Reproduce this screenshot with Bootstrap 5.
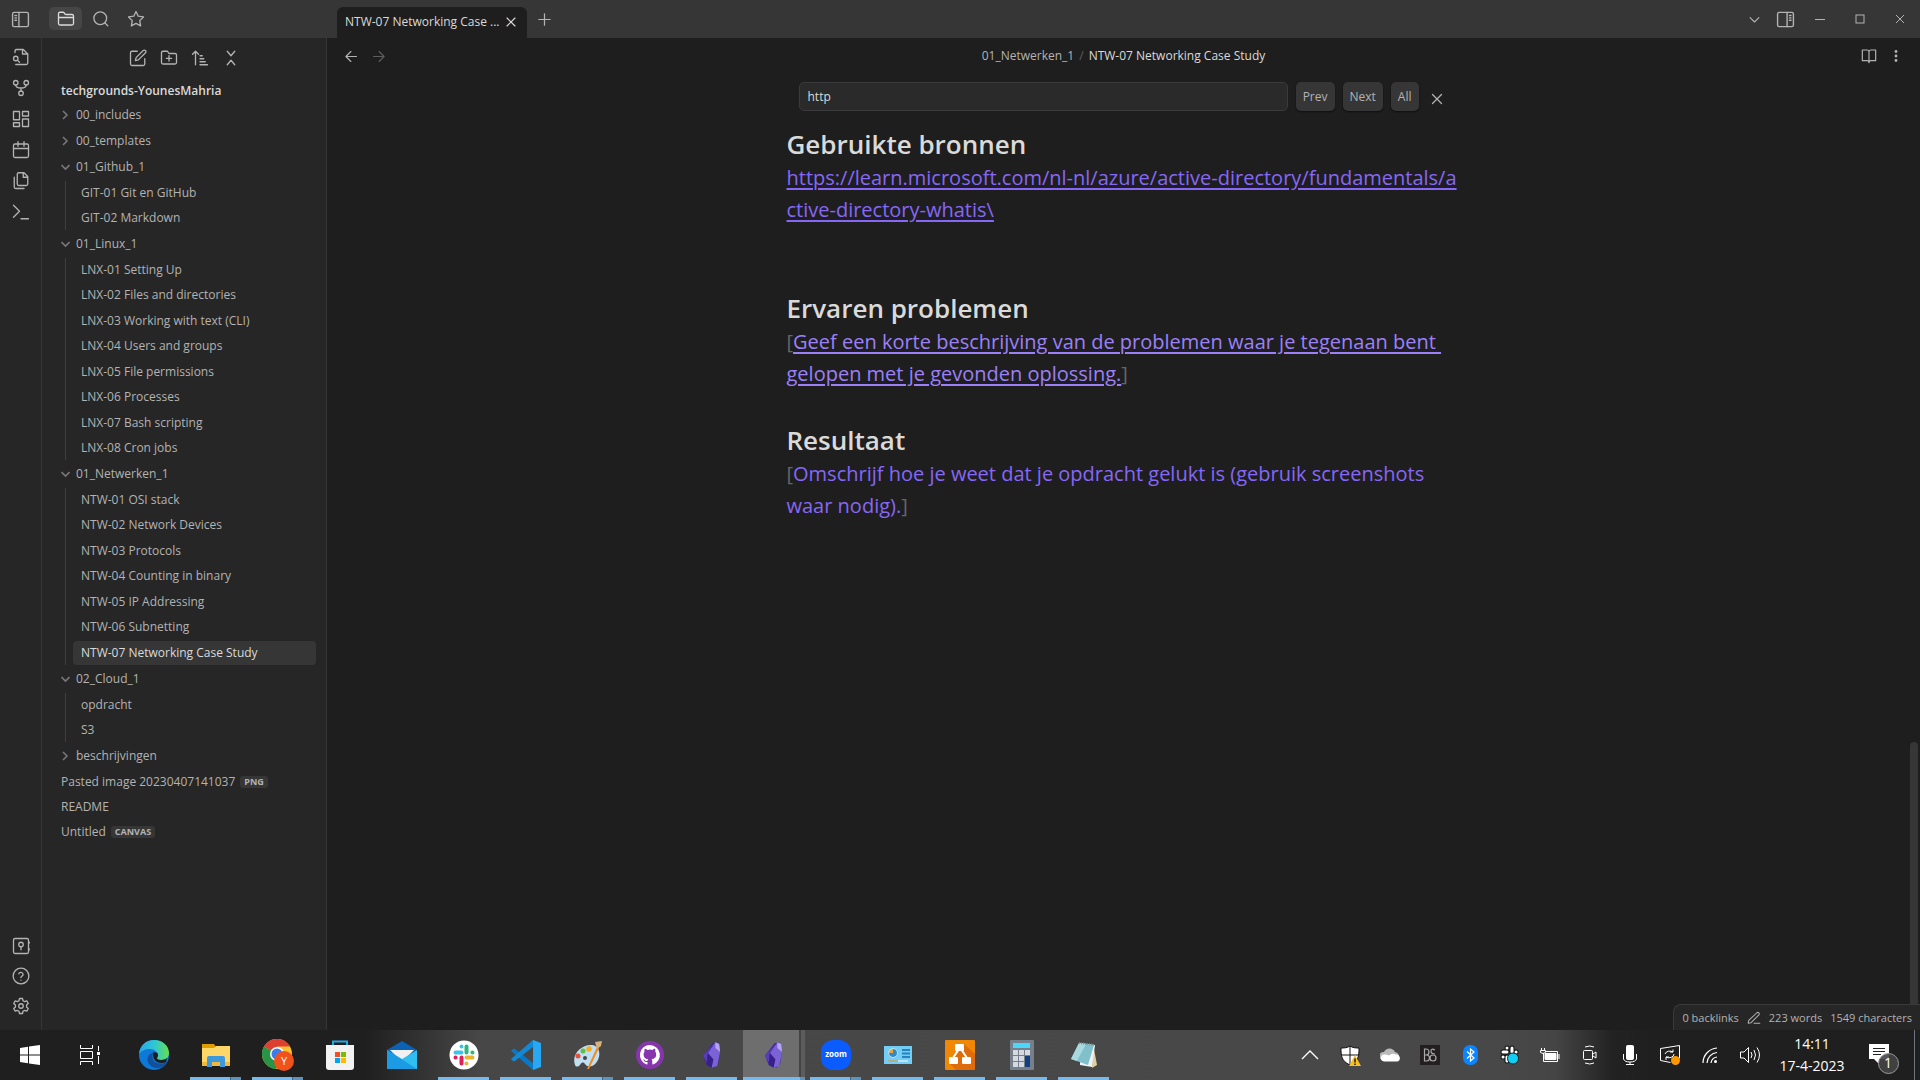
<!DOCTYPE html>
<html lang="nl" data-bs-theme="dark">
<head>
<meta charset="utf-8">
<meta name="viewport" content="width=device-width, initial-scale=1">
<title>NTW-07 Networking Case Study</title>
<link href="https://cdn.jsdelivr.net/npm/bootstrap@5.3.0/dist/css/bootstrap.min.css" rel="stylesheet">
<style>
:root{--bg:#1e1e1e;--side:#262626;--bar:#363636;--txt:#dadada;--mut:#b3b3b3;--faint:#666}
body{font-family:"Open Sans","Noto Sans",sans-serif;font-size:12px;line-height:24px;background:var(--bg);color:var(--mut)}
button{background:none;border:0;padding:0;color:inherit;display:inline-flex;align-items:center;justify-content:center;flex:none}
a{color:inherit;text-decoration:none}
svg{flex:none;display:block}
.ln{fill:none;stroke:currentColor;stroke-width:1.75;stroke-linecap:round;stroke-linejoin:round}
.titlebar{height:38px;background:var(--bar)}
.left-head{width:327px;padding:7px 0 0 10px}
.sq{width:20px;height:24px}
.panes{gap:2px;margin-left:19px}
.pane-tab{width:33px;height:23px;border-radius:5px}
.pane-tab.on{background:#464646;color:var(--txt)}
.doc-tab{width:190px;height:31px;margin:7px 0 0 10px;padding:0 8px 2px 8px;border-radius:6px 6px 0 0;background:var(--bg);color:var(--txt)}
.new-tab{margin-left:9px}
.win button{width:32px}
.win .tabs-menu{width:24px}
.win .right-side{width:38px}
.win .maxi{width:48px}
.mid{min-height:0}
.ribbon{width:42px;border-right:1px solid var(--bar);background:var(--side);padding:9px 0 14px}
.ribbon button{width:41px;height:20px}
.ribbon-set{gap:10px}
.ribbon-top{gap:11px}
.explorer{width:285px;border-right:1px solid var(--bar);background:var(--side)}
.acts{padding:10px 0 10px;gap:11px}
.acts button{width:20px;height:20px}
.tree{padding:1px 10px 0 19px}
.vault{color:var(--txt);font-weight:600}
.node{display:flex;align-items:center;height:24px;border-radius:4px;white-space:nowrap}
.dir{margin-bottom:2px;gap:6px}
.dir svg{color:#777}
.kids{margin-left:4px;border-left:1px solid #3f3f3f;padding-left:7px;margin-bottom:2px}
.kids .node{padding-left:8px;margin-bottom:1px}
.kids .node:nth-child(even){margin-bottom:2px}
.kids .node:last-child{margin-bottom:0}
.node.on{background:var(--bar);color:var(--txt)}
.file{margin-bottom:1px;gap:5px}
.ext{background:var(--bar);border-radius:3px;font-size:9px;font-weight:700;line-height:12px;padding:0 4px}
.view-head{height:36px;padding:0 14px 0 14px}
.crumbs{gap:5px}
.crumbs .here{color:var(--txt)}
.dim{color:#5e5e5e}
.pair{gap:7px}
.note{width:100%;max-width:674px}
.find{padding:8px 14px 15px 12px;gap:8px}
.find input{height:29px;min-width:0;background:#2a2a2a;border:1px solid #3a3a3a;border-radius:5px;color:var(--txt);padding:0 8px;font-size:12px;outline:0}
.find .act{height:29px;padding:0 7px;background:var(--bar);border-radius:5px;box-shadow:0 1px 2px #0008}
.note h2{font-size:26px;line-height:36px;font-weight:600;color:var(--txt);margin:0}
.note p{font-size:20px;line-height:32px;color:#8767f8;white-space:nowrap;margin:0 0 32px}
.note .sources{margin-bottom:64px}
.note .brk{color:var(--faint)}
.note p a{text-decoration:underline;text-decoration-thickness:2px;text-underline-offset:3px}
.note .lit{color:#9c80f8}
.thumb{right:2px;top:704px;bottom:26px;width:8px;border-radius:4px 4px 0 0;background:var(--bar)}
.status{right:0;bottom:0;height:26px;padding:0 8px;border:1px solid #3a3a3a;border-width:1px 0 0 1px;border-radius:8px 0 0 0;background:var(--side);font-size:11px}
.taskbar{height:50px;background:linear-gradient(90deg,#1f1f1f 0,#1f1f1f 19%,#474747 25%,#484848 78%,#454545 81%,#222 84%,#1f1f1f 86%);color:#fff}
.start{width:60px}
.apps{margin-left:3px}
.app{width:62px;position:relative}
.run::after{content:"";position:absolute;bottom:0;left:5px;width:51px;height:3px;background:#76b9ed}
.many::after{background:linear-gradient(90deg,#76b9ed 40px,#3f6583 40px,#3f6583 41px,#5e92ba 41px)}
.focus-app{background:linear-gradient(90deg,#6e6e6e 56px,#444 56px,#444 58px,#5c5c5c 58px)}
.focus-app::after{left:0;width:62px;background:linear-gradient(90deg,#76b9ed 57px,#5e92ba 57px)}
.tray button{width:40px}
.tray .notes{width:60px}
.peek{width:6px}
.clock{width:84px;font-size:14px;line-height:22px;padding-top:3px}
</style>
<script src="https://cdn.jsdelivr.net/npm/bootstrap@5.3.0/dist/js/bootstrap.bundle.min.js"></script>
</head>
<body>
<svg width="0" height="0" class="position-absolute" aria-hidden="true">
<defs>
<symbol id="right" viewBox="0 0 9 12"><path d="M2 2l4 4-4 4" fill="none" stroke="currentColor" stroke-width="1.6"/></symbol>
<symbol id="down" viewBox="0 0 9 12"><path d="M0.500 4l4 4 4-4" fill="none" stroke="currentColor" stroke-width="1.6"/></symbol>
<symbol id="cross" viewBox="0 0 24 24"><path d="M18 6L6 18M6 6l12 12"/></symbol>
<symbol id="gem" viewBox="0 0 20 30"><path d="M10 2l5-1 3 8-2 15-4 4-8-3-4-10z" fill="#43289a"/><path d="M13 1l4 2 1 8-3 15-6 2 1-8-5-7z" fill="#7b63d6"/><path d="M13 1l4 2 1 8-5-4z" fill="#b5a3f5"/><path d="M12 2L5 12l-1 10-4-7z" fill="#5a3dbd"/><path d="M5 12l6 7-2 9-5-3z" fill="#38208a"/></symbol>
</defs>
</svg>
<div class="d-flex flex-column vh-100 overflow-hidden">

<header class="titlebar d-flex flex-shrink-0">
  <div class="left-head d-flex align-items-start">
    <button class="sq" aria-label="Zijbalk"><svg class="ln" width="19" height="19" viewBox="0 0 24 24"><rect x="2" y="3" width="20" height="18" rx="2"/><path d="M10 3v18M5 7h2M5 10h2M5 13h2"/></svg></button>
    <div class="panes d-flex">
      <button class="pane-tab on" aria-label="Bestanden"><svg class="ln" width="18" height="18" viewBox="0 0 24 24"><path d="M4 20h16a2 2 0 0 0 2-2V8a2 2 0 0 0-2-2h-7.900a2 2 0 0 1-1.700-.9l-.8-1.200A2 2 0 0 0 7.900 3H4a2 2 0 0 0-2 2v13a2 2 0 0 0 2 2zM2 10h20"/></svg></button>
      <button class="pane-tab" aria-label="Zoeken"><svg class="ln" width="18" height="18" viewBox="0 0 24 24"><circle cx="11" cy="11" r="8.500"/><path d="M21 21l-4-4"/></svg></button>
      <button class="pane-tab" aria-label="Favorieten"><svg class="ln" width="18" height="18" viewBox="0 0 24 24"><path d="M12 2l3 6.300 7 1-5 4.900 1.200 6.900L12 17.800 5.800 21.100 7 14.200 2 9.300l7-1z"/></svg></button>
    </div>
  </div>
  <div class="doc-tab d-flex align-items-center justify-content-between"><span>NTW-07 Networking Case ...</span><button aria-label="Sluiten"><svg class="ln" width="16" height="16"><use href="#cross"/></svg></button></div>
  <button class="new-tab" aria-label="Nieuw tabblad"><svg class="ln" width="17" height="17" viewBox="0 0 24 24"><path d="M12 4v16M4 12h16"/></svg></button>
  <div class="win ms-auto me-1 d-flex align-items-center">
    <button class="tabs-menu" aria-label="Tabbladen"><svg class="ln" width="15" height="15" viewBox="0 0 24 24"><path d="M5 9l7 7 7-7"/></svg></button>
    <button class="right-side" aria-label="Rechter zijbalk"><svg class="ln" width="19" height="19" viewBox="0 0 24 24"><rect x="2" y="3" width="20" height="18" rx="2"/><path d="M14 3v18M17 7h2M17 10h2M17 13h2"/></svg></button>
    <button aria-label="Minimaliseren"><svg width="10" height="10"><path d="M0 5.500h10" stroke="currentColor"/></svg></button>
    <button class="maxi" aria-label="Maximaliseren"><svg width="10" height="10"><rect x="1" y="1" width="8" height="8" fill="none" stroke="currentColor"/></svg></button>
    <button aria-label="Afsluiten"><svg width="10" height="10"><path d="M1 1l8 8M9 1l-8 8" stroke="currentColor"/></svg></button>
  </div>
</header>

<div class="mid d-flex flex-grow-1">
  <nav class="ribbon d-flex flex-column justify-content-between flex-shrink-0">
    <div class="ribbon-set ribbon-top d-flex flex-column">
      <button aria-label="Snel zoeken"><svg class="ln" width="18" height="18" viewBox="0 0 24 24"><path d="M4 6V4a2 2 0 0 1 2-2h9l6 6v12a2 2 0 0 1-2 2H5M14 2v6h7"/><circle cx="5" cy="14" r="3"/><path d="M7.500 16.500L10 19"/></svg></button>
      <button aria-label="Grafiek"><svg class="ln" width="18" height="18" viewBox="0 0 24 24"><circle cx="12" cy="19" r="3"/><circle cx="5" cy="5" r="3"/><circle cx="19" cy="5" r="3"/><path d="M5 8c0 3 2 4 7 4s7-1 7-4M12 12v4"/></svg></button>
      <button aria-label="Canvas"><svg class="ln" width="18" height="18" viewBox="0 0 24 24"><path d="M2 2h8v11H2zM14 2h8v6h-8zM14 12h8v10h-8zM2 17h8v5H2z"/></svg></button>
      <button aria-label="Dagelijkse notitie"><svg class="ln" width="18" height="18" viewBox="0 0 24 24"><rect x="2" y="4" width="20" height="18" rx="2"/><path d="M16 1v6M8 1v6M2 10h20"/></svg></button>
      <button aria-label="Sjablonen"><svg class="ln" width="18" height="18" viewBox="0 0 24 24"><path d="M16 1H9a2 2 0 0 0-2 2v13a2 2 0 0 0 2 2h10a2 2 0 0 0 2-2V6zM15 1v6h6M3 7v13a2 2 0 0 0 2 2h11"/></svg></button>
      <button aria-label="Opdrachten"><svg class="ln" width="18" height="18" viewBox="0 0 24 24"><path d="M2 19l8-8-8-8M12 21h10"/></svg></button>
    </div>
    <div class="ribbon-set d-flex flex-column">
      <button aria-label="Kluis"><svg class="ln" width="18" height="18" viewBox="0 0 24 24"><rect x="2" y="2" width="20" height="20" rx="2"/><circle cx="12" cy="10" r="3"/><path d="M12 13v4M23 7v1M23 16v1"/></svg></button>
      <button aria-label="Hulp"><svg class="ln" width="18" height="18" viewBox="0 0 24 24"><circle cx="12" cy="12" r="10.500"/><path d="M9 9a3 3 0 0 1 5.800 1c0 2-3 2.500-3 4M12 17.500v.1"/></svg></button>
      <button aria-label="Instellingen"><svg class="ln" width="18" height="18" viewBox="0 0 24 24"><path d="M10 2h4l.7 3 2 1.100 3-.9 2 3.500-2.300 2.100v2.400l2.300 2.100-2 3.500-3-.9-2 1.100L14 22h-4l-.7-3-2-1.100-3 .9-2-3.500 2.300-2.100v-2.400L2.300 8.700l2-3.500 3 .9 2-1.100z"/><circle cx="12" cy="12" r="3"/></svg></button>
    </div>
  </nav>

  <aside class="explorer flex-shrink-0">
    <div class="acts d-flex justify-content-center">
      <button aria-label="Nieuwe notitie"><svg class="ln" width="18" height="18" viewBox="0 0 24 24"><path d="M11 3H4a2 2 0 0 0-2 2v15a2 2 0 0 0 2 2h15a2 2 0 0 0 2-2v-7M19 2a2 2 0 0 1 3 3l-9.500 9.500-4 1 1-4z"/></svg></button>
      <button aria-label="Nieuwe map"><svg class="ln" width="18" height="18" viewBox="0 0 24 24"><path d="M4 20h16a2 2 0 0 0 2-2V8a2 2 0 0 0-2-2h-8l-2-3H4a2 2 0 0 0-2 2v13a2 2 0 0 0 2 2zM12 9v7M8.500 12.500h7"/></svg></button>
      <button aria-label="Sorteren"><svg class="ln" width="18" height="18" viewBox="0 0 24 24"><path d="M2 7l4-4 4 4M6 3v18M12 9h3M12 13h5M12 17h7M12 21h10"/></svg></button>
      <button aria-label="Inklappen"><svg class="ln" width="18" height="18" viewBox="0 0 24 24"><path d="M7 21l5-6 5 6M7 3l5 6 5-6"/></svg></button>
    </div>
    <div class="tree">
      <div class="vault">techgrounds-YounesMahria</div>
      <a href="#" class="node dir"><svg width="9" height="12"><use href="#right"/></svg>00_includes</a>
      <a href="#" class="node dir"><svg width="9" height="12"><use href="#right"/></svg>00_templates</a>
      <a href="#" class="node dir"><svg width="9" height="12"><use href="#down"/></svg>01_Github_1</a>
      <div class="kids"><a href="#" class="node">GIT-01 Git en GitHub</a><a href="#" class="node">GIT-02 Markdown</a></div>
      <a href="#" class="node dir"><svg width="9" height="12"><use href="#down"/></svg>01_Linux_1</a>
      <div class="kids"><a href="#" class="node">LNX-01 Setting Up</a><a href="#" class="node">LNX-02 Files and directories</a><a href="#" class="node">LNX-03 Working with text (CLI)</a><a href="#" class="node">LNX-04 Users and groups</a><a href="#" class="node">LNX-05 File permissions</a><a href="#" class="node">LNX-06 Processes</a><a href="#" class="node">LNX-07 Bash scripting</a><a href="#" class="node">LNX-08 Cron jobs</a></div>
      <a href="#" class="node dir"><svg width="9" height="12"><use href="#down"/></svg>01_Netwerken_1</a>
      <div class="kids"><a href="#" class="node">NTW-01 OSI stack</a><a href="#" class="node">NTW-02 Network Devices</a><a href="#" class="node">NTW-03 Protocols</a><a href="#" class="node">NTW-04 Counting in binary</a><a href="#" class="node">NTW-05 IP Addressing</a><a href="#" class="node">NTW-06 Subnetting</a><a href="#" class="node on">NTW-07 Networking Case Study</a></div>
      <a href="#" class="node dir"><svg width="9" height="12"><use href="#down"/></svg>02_Cloud_1</a>
      <div class="kids"><a href="#" class="node">opdracht</a><a href="#" class="node">S3</a></div>
      <a href="#" class="node dir"><svg width="9" height="12"><use href="#right"/></svg>beschrijvingen</a>
      <a href="#" class="node file">Pasted image 20230407141037<span class="ext">PNG</span></a>
      <a href="#" class="node file">README</a>
      <a href="#" class="node file">Untitled<span class="ext">CANVAS</span></a>
    </div>
  </aside>

  <main class="flex-grow-1 position-relative">
    <div class="view-head d-flex align-items-center justify-content-between">
      <div class="pair d-flex">
        <button class="sq" aria-label="Terug"><svg class="ln" width="15" height="15" viewBox="0 0 24 24"><path d="M20 12H4M11 4l-8 8 8 8"/></svg></button>
        <button class="sq dim" aria-label="Vooruit"><svg class="ln" width="15" height="15" viewBox="0 0 24 24"><path d="M4 12h16M13 4l8 8-8 8"/></svg></button>
      </div>
      <div class="crumbs d-flex"><a href="#">01_Netwerken_1</a><span class="dim">/</span><span class="here">NTW-07 Networking Case Study</span></div>
      <div class="pair d-flex">
        <button class="sq" aria-label="Leesweergave"><svg class="ln" width="16" height="16" viewBox="0 0 24 24"><path d="M2 3h7a3 3 0 0 1 3 3v16c0-2-1-3-3-3H2zM22 3h-7a3 3 0 0 0-3 3v16c0-2 1-3 3-3h7z"/></svg></button>
        <button class="sq" aria-label="Meer"><svg width="16" height="16" fill="currentColor"><circle cx="8" cy="3.500" r="1.400"/><circle cx="8" cy="8" r="1.400"/><circle cx="8" cy="12.500" r="1.400"/></svg></button>
      </div>
    </div>
    <div class="note mx-auto">
      <div class="find d-flex align-items-center">
        <input class="flex-grow-1" type="text" value="http" aria-label="Zoek">
        <button class="act">Prev</button><button class="act">Next</button><button class="act">All</button>
        <button class="sq" aria-label="Zoekbalk sluiten"><svg class="ln mt-1" width="18" height="18"><use href="#cross"/></svg></button>
      </div>
      <h2>Gebruikte bronnen</h2>
      <p class="sources"><a href="#">https://learn.microsoft.com/nl-nl/azure/active-directory/fundamentals/a<br>ctive-directory-whatis\</a></p>
      <h2>Ervaren problemen</h2>
      <p><span class="brk">[</span><a href="#" class="lit">Geef een korte beschrijving van de problemen waar je tegenaan bent&nbsp;<br>gelopen met je gevonden oplossing.</a><span class="brk">]</span></p>
      <h2>Resultaat</h2>
      <p><span class="brk">[</span>Omschrijf hoe je weet dat je opdracht gelukt is (gebruik screenshots<br>waar nodig).<span class="brk">]</span></p>
    </div>
    <div class="thumb position-absolute"></div>
    <div class="status position-absolute d-flex align-items-center"><span>0 backlinks</span><svg class="ln mx-2" width="14" height="14" viewBox="0 0 24 24"><path d="M12 21h10M17 3a2.500 2.500 0 0 1 3.500 3.500L7 20l-5 1 1-5z"/></svg><span class="me-2">223 words</span><span>1549 characters</span></div>
  </main>
</div>

<footer class="taskbar d-flex flex-shrink-0">
  <button class="start" aria-label="Start"><svg width="20" height="20" fill="#fff"><path d="M0 3l8-1.200V9.500H0zM9 1.600L20 0v9.500H9zM0 10.500h8v7.700L0 17zM9 10.500h11V20L9 18.400z"/></svg></button>
  <button class="start" aria-label="Taakweergave"><svg width="20" height="20" fill="none" stroke="#fff"><path d="M.5 0v3.500h12V0M.5 20v-3.500h12V20M.5 6.500h12v7H.5zM18.500 1v5M18.500 11v8"/><path d="M17 7h3v3h-3z" fill="#fff" stroke="none"/></svg></button>
  <div class="apps d-flex">
  <button class="app" aria-label="Edge"><svg width="30" height="30" viewBox="0 0 30 30"><defs><linearGradient id="e1"><stop offset="0" stop-color="#2aa5e8"/><stop offset=".5" stop-color="#2fc5d8"/><stop offset="1" stop-color="#66e04b"/></linearGradient></defs><circle cx="15" cy="15" r="15" fill="#0c7ad6"/><path d="M0 14C1 5 7 0 15 0c9 0 15 6 15 13 0 5-4 7-8 7-3 0-4-1-4-2 0-1 1-1 1-3 0-3-4-6-8-6C6 9 2 11 0 14z" fill="url(#e1)"/><path d="M11 14c-6 6 0 14 7 14 4 0 7-1 10-5 1-1 0-2-1-1-8 4-16 0-13-9z" fill="#124f9c"/><path d="M14 12.500c3-1 5 .5 5 2.500s-1 2-1 3c0 1 1 2 4 2 3 0 5-1 6-2l-1 4c-7 3-14-1-13-9.500z" fill="#1e1e1e"/></svg></button>
  <button class="app run many" aria-label="Verkenner"><svg width="28" height="24" viewBox="0 0 28 24"><path d="M0 1h12l2 3-2 3H0z" fill="#e09d00"/><path d="M0 5h12l2-2h14v20H0z" fill="#ffd667"/><path d="M0 19h28v4H0z" fill="#f0b93b"/><path d="M5 24V15q0-2 2-2h14q2 0 2 2v9h-5v-5h-8v5z" fill="#3d98dc"/></svg></button>
  <button class="app run many" aria-label="Chrome"><svg width="32" height="32" viewBox="0 0 32 32"><circle cx="15" cy="15" r="15" fill="#fbc22d"/><path d="M15 15L2 7.500A15 15 0 0 1 28 7.500H15z" fill="#dd4032"/><path d="M15 15L2 7.500A15 15 0 0 0 14 30l7-12z" fill="#279447"/><circle cx="15" cy="15" r="7" fill="#fff"/><circle cx="15" cy="15" r="5.500" fill="#3a7cec"/><circle cx="22" cy="22" r="10" fill="#f1511b"/><text x="22" y="26" text-anchor="middle" font-size="11" fill="#fff">Y</text></svg></button>
  <button class="app" aria-label="Store"><svg width="30" height="30" viewBox="0 0 30 30"><path d="M8 7V1.500h14V7" fill="none" stroke="#22a7e8" stroke-width="2"/><path d="M1 5h28v22q0 3-3 3H4q-3 0-3-3z" fill="#f2f2f2"/><path d="M10 12h5v5h-5z" fill="#f25022"/><path d="M16 12h5v5h-5z" fill="#7fba00"/><path d="M10 18h5v5h-5z" fill="#00a4ef"/><path d="M16 18h5v5h-5z" fill="#ffb900"/></svg></button>
  <button class="app" aria-label="Mail"><svg width="30" height="28" viewBox="0 0 30 28"><path d="M0 9l15-9 15 9-15 9z" fill="#0b62b5"/><path d="M3 9h24l-9 9h-6z" fill="#f1f1f1"/><path d="M0 9l15 9 15-9v19H0z" fill="#30bdf0"/><path d="M0 9l30 19H0z" fill="#1b9be4"/></svg></button>
  <button class="app run" aria-label="Slack"><svg width="30" height="30" viewBox="0 0 30 30"><circle cx="15" cy="15" r="14.500" fill="#fff"/><g fill="none" stroke-width="4" stroke-linecap="round"><path d="M6.500 12.500h6M12.500 6.500v.1" stroke="#36c5f0"/><path d="M17.500 6.500v6M23.500 12.500h-.1" stroke="#2eb67d"/><path d="M23.500 17.500h-6M17.500 23.500v-.1" stroke="#ecb22e"/><path d="M12.500 23.500v-6M6.500 17.500h.1" stroke="#e01e5a"/></g></svg></button>
  <button class="app run" aria-label="Visual Studio Code"><svg width="30" height="30" viewBox="0 0 30 30"><path d="M0 11l2-2q1-.6 2 0l18 14v7z" fill="#0b78c6"/><path d="M0 19l2 2q1 .6 2 0L22 7V0z" fill="#1389d6"/><path d="M22 0l8 3v24l-8 3z" fill="#28a8f2"/></svg></button>
  <button class="app run many" aria-label="Paint"><svg width="30" height="30" viewBox="0 0 30 30"><path d="M2 25C-2 14 9 4 19 5c9 1 9 12 4 18-5 6-10 3-11 1-2-3-4-1-5 1-2 2-4 2-5 0z" fill="#c0dff0"/><circle cx="12" cy="18" r="2" fill="#474747"/><circle cx="5" cy="16" r="2.500" fill="#e45141"/><circle cx="10" cy="11" r="2.500" fill="#5fbd49"/><circle cx="16" cy="9" r="2.800" fill="#f5ad20"/><path d="M14 29L24 7l2 1-10 21z" fill="#ef8b24"/><path d="M22 2l7-1-1 5-4 3z" fill="#d8b27c"/></svg></button>
  <button class="app run" aria-label="GitHub Desktop"><svg width="28" height="28" viewBox="0 0 28 28"><circle cx="14" cy="14" r="14" fill="#8735ad"/><path d="M14 4a10 10 0 0 0-3.200 19.500c.5.1.7-.2.7-.5v-2c-2.800.6-3.400-1.200-3.400-1.200-.4-1.100-1.100-1.500-1.100-1.500 1-.6 1.600.6 1.600.6.9 1.500 2.300 1.100 2.900.8.1-.7.400-1.100.7-1.400-2.200-.3-4.600-1.100-4.600-5 0-1.100.4-2 1-2.700-.1-.300-.4-1.300.1-2.700 0 0 .8-.3 2.700 1a9 9 0 0 1 5 0c1.900-1.300 2.700-1 2.700-1 .5 1.400.2 2.400.1 2.700.6.7 1 1.600 1 2.700 0 3.900-2.400 4.700-4.600 5 .4.300.7.900.7 1.900V23c0 .3.200.6.700.5A10 10 0 0 0 14 4z" fill="#fff"/></svg></button>
  <button class="app run" aria-label="Obsidian"><svg width="19" height="29"><use href="#gem"/></svg></button>
  <button class="app run many focus-app" aria-label="Obsidian"><svg width="19" height="29"><use href="#gem"/></svg></button>
  <button class="app run many" aria-label="Zoom"><svg width="30" height="30" viewBox="0 0 30 30"><rect width="30" height="30" rx="12" fill="#0b5cff"/><text x="15" y="17" text-anchor="middle" font-size="8" font-weight="700" fill="#fff">zoom</text></svg></button>
  <button class="app run" aria-label="Systeem"><svg width="28" height="18" viewBox="0 0 28 18"><path d="M0 0h28v18H0z" fill="#74cdf5"/><circle cx="9" cy="7" r="4.500" fill="#fff"/><path d="M9 7V3a4 4 0 1 1-4 4z" fill="#2f89cd"/><path d="M9 7H5a4 4 0 0 1 4-4z" fill="#f0a23a"/><path d="M18 4h8M18 7.500h8M18 11h8" stroke="#2784bf" stroke-width="2"/><path d="M4 15h10" stroke="#f18f22"/><path d="M14 15h10" stroke="#fff"/></svg></button>
  <button class="app run" aria-label="draw.io"><svg width="30" height="30" viewBox="0 0 30 30"><rect width="30" height="30" rx="1" fill="#f08705"/><path d="M19 4l11 10v16H11l-6-6 10-14z" fill="#df6c0c"/><path d="M14 9L8 18M16 9l6 9" stroke="#fff" stroke-width="2"/><g fill="#fff"><rect x="10" y="4" width="9" height="7" rx="1"/><rect x="4" y="17" width="9" height="7" rx="1"/><rect x="17" y="17" width="9" height="7" rx="1"/></g></svg></button>
  <button class="app run" aria-label="Rekenmachine"><svg width="24" height="30" viewBox="0 0 24 30"><rect width="24" height="30" rx="1" fill="#76808c"/><path d="M3 3h17v5H3z" fill="#4bd6fa"/><path d="M3 10h5v5H3zM9 10h5v5H9zM15 10h5v5h-5zM3 16h5v5H3zM9 16h5v5H9zM3 22h5v5H3zM9 22h5v5H9z" fill="#d6dae0"/><path d="M15 16h5v11h-5z" fill="#123f80"/></svg></button>
  <button class="app run" aria-label="Kladblok"><svg width="28" height="28" viewBox="0 0 28 28"><path d="M23 3l4 21-5 3z" fill="#e2cf9e"/><path d="M10 2l15 2-3 22-12-2z" fill="#eef4f5"/><path d="M9 2l15 2-6 20L1 18z" fill="#7fc0ca"/><path d="M9 2l7 1L7 20l-6-2z" fill="#a9d9df"/><path d="M9 2l15 2" stroke="#8a8a8a" stroke-width="2" stroke-dasharray="1 1"/></svg></button>
  </div>

  <div class="tray ms-auto d-flex">
    <button aria-label="Verborgen pictogrammen"><svg width="18" height="12" fill="none" stroke="#fff" stroke-width="1.300"><path d="M1 10l8-8 8 8"/></svg></button>
    <button aria-label="Beveiliging"><svg width="21" height="21" viewBox="0 0 21 21"><path d="M10 1c3 2 6 2 9 2 0 7 0 13-9 17C1 16 1 10 1 3c3 0 6 0 9-2z" fill="#fff" stroke="#111"/><path d="M10 1v19M1 10h18" stroke="#111"/><path d="M15 10l6 11H9z" fill="#fcbf22"/><path d="M15 13.500v4M15 18.500v1.500" stroke="#111" stroke-width="1.400"/></svg></button>
    <button aria-label="OneDrive"><svg width="20" height="14" viewBox="0 0 20 14"><path d="M3 12a4 4 0 0 1 1-8 6 6 0 0 1 11 0q5 1 4 7z" fill="#b9b9b9"/><path d="M4 13.500a3.500 3.500 0 0 1 1-7q2 0 4 1 3-3 7-1c5 0 5 7 1 7z" fill="#fff"/></svg></button>
    <button aria-label="Audio"><svg width="20" height="20"><path d="M0 0h20v20H0z" fill="#231f20"/><g fill="none" stroke="#aaa" stroke-width="1.200"><path d="M4.500 4v12h2a3 3 0 0 0 0-6h-2 1.500a3 3 0 0 0 0-6z"/><circle cx="13" cy="13" r="3"/><path d="M15 5q-4-2-4 1t4 3"/></g></svg></button>
    <button aria-label="Bluetooth"><svg width="15" height="20"><rect width="15" height="20" rx="7" fill="#0a84ff"/><path d="M4 6.500l7 6.500-3.500 3V4L11 7l-7 6.500" fill="none" stroke="#fff" stroke-width="1.200"/></svg></button>
    <button aria-label="Slack"><svg width="20" height="20" viewBox="0 0 20 20"><g fill="none" stroke-linecap="round"><g stroke="#111" stroke-width="5"><path d="M3 7h4M7 3v.1M12 3v4M16 7h.1M12 12h4M7 12v4M3 12h.1"/></g><g stroke="#fff" stroke-width="3"><path d="M3 7h4M7 3v.1M12 3v4M16 7h.1M12 12h4M7 12v4M3 12h.1"/></g></g><circle cx="13" cy="13.500" r="5.500" fill="#14cdf2" stroke="#222"/></svg></button>
    <button aria-label="Batterij"><svg width="21" height="14" fill="none" stroke="#fff"><path d="M3.500 5v8.500h14V3.500H6"/><path d="M7 5.500h9v6H5v-6z" fill="#fff"/><path d="M19 6v5M.5 2.500h5v2q-2.500 2-5 0zM1.500 0v2M4.500 0v2"/></svg></button>
    <button aria-label="Camera"><svg width="16" height="20" fill="none" stroke="#fff"><rect x="1.500" y="5.500" width="9" height="9" rx="1"/><path d="M11 9l3-2v6l-3-2M3 2q5-2 9 0M3 18q5 2 9 0"/></svg></button>
    <button aria-label="Microfoon"><svg width="14" height="20" fill="none" stroke="#fff"><rect x="3.500" y=".5" width="7" height="14" rx="1" fill="#fff"/><path d="M.5 9v5q1 3 6.500 3t6.500-3V9M7 17v2.500M3 19.500h8"/></svg></button>
    <button aria-label="Update"><svg width="21" height="20" fill="none" stroke="#fff"><path d="M.5 3.500l19-3v13M.5 3.500v12l10 2M5 9a5 4 0 0 1 8-2V4.500M13 7h-3M14 9a5 4 0 0 1-8 3v3M6 12h3"/><circle cx="15.500" cy="15.500" r="4.500" fill="#ff9800" stroke="none"/></svg></button>
    <button aria-label="Wifi"><svg width="16" height="17" fill="none" stroke="#fff" stroke-width="1.200"><path d="M1 16A15 15 0 0 1 15 1M5 16A11 11 0 0 1 15 5.500M9 16a7 7 0 0 1 6-6"/><circle cx="13.500" cy="14.500" r="1.500" fill="#fff" stroke="none"/></svg></button>
    <button aria-label="Volume"><svg width="21" height="18" fill="none" stroke="#fff"><path d="M.5 6h3.500L8.500 1.500v15L4 12H.5zM11 6q2 3 0 6M14 4q3 5 0 10M17 1.500q5 7.500 0 15"/></svg></button>
    <div class="clock text-center"><div>14:11</div><div>17-4-2023</div></div>
    <button class="notes" aria-label="Meldingen"><svg class="mt-2" width="32" height="32" viewBox="0 0 32 32"><path d="M1 1h20v15H11v5l-5-5H1z" fill="#fff"/><path d="M5 5.500h12M5 8.500h12M5 11.500h8" stroke="#222"/><circle cx="20.500" cy="20.500" r="10" fill="#444" fill-opacity=".9" stroke="#999"/><text x="20" y="25" text-anchor="middle" font-size="14" fill="#fff">1</text></svg></button>
    <div class="peek border-start border-secondary"></div>
  </div>
</footer>
</div>
</body>
</html>
